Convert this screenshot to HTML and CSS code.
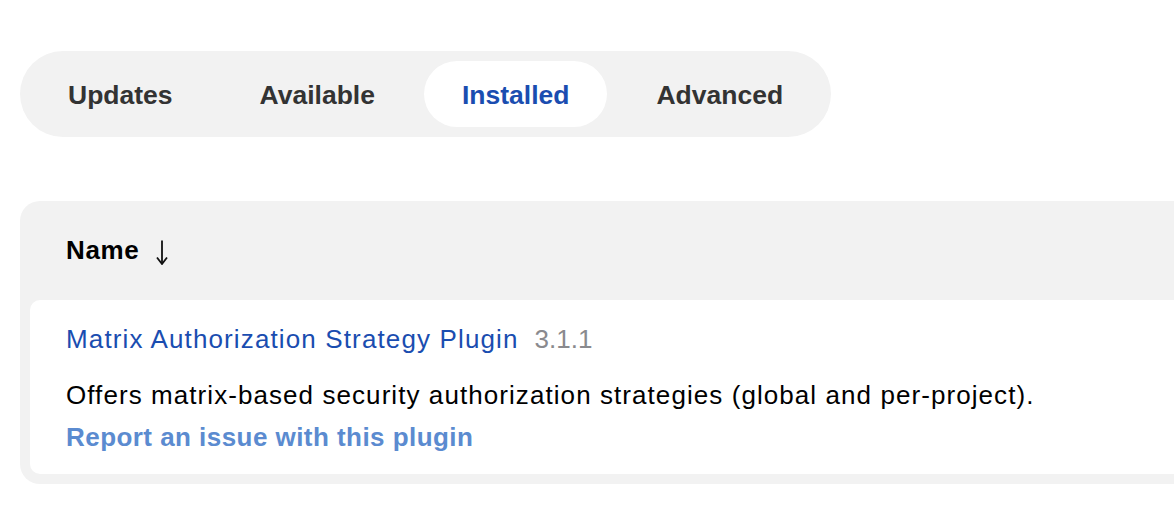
FILE: index.html
```html
<!DOCTYPE html>
<html>
<head>
<meta charset="utf-8">
<link rel="stylesheet" href="styles.css">
</head>
<body>
<div class="page">
  <nav class="tabs">
    <a class="tab">Updates</a>
    <a class="tab">Available</a>
    <a class="tab active">Installed</a>
    <a class="tab">Advanced</a>
  </nav>
  <div class="table">
    <div class="thead">
      <span class="th">Name</span>
      <svg class="arrow" width="12" height="25" viewBox="0 0 12 25" aria-hidden="true">
        <path d="M6 0.5 V23" stroke="#111" stroke-width="1.8" fill="none"/>
        <path d="M1 17.5 L6 24 L11 17.5" stroke="#111" stroke-width="1.8" fill="none" stroke-linejoin="miter"/>
      </svg>
    </div>
    <div class="row">
      <div class="title-line">
        <a class="plugin-name">Matrix Authorization Strategy Plugin</a>
        <span class="version">3.1.1</span>
      </div>
      <div class="desc">Offers matrix-based security authorization strategies (global and per-project).</div>
      <a class="report">Report an issue with this plugin</a>
    </div>
  </div>
</div>
</body>
</html>
```
FILE: styles.css
```css
html, body {
  margin: 0;
  padding: 0;
  background: #ffffff;
}
body {
  font-family: "Liberation Sans", Arial, sans-serif;
  color: #000;
  overflow: hidden;
  width: 1174px;
  height: 510px;
}
.page {
  padding: 51px 0 0 20px;
}
.tabs {
  display: inline-flex;
  gap: 11px;
  padding: 10px;
  background: #f2f2f2;
  border-radius: 43px;
}
.tab {
  display: flex;
  align-items: center;
  height: 66px;
  padding: 2px 38px 0;
  box-sizing: border-box;
  border-radius: 33px;
  font-size: 26.5px;
  font-weight: bold;
  color: #333333;
}
.tab.active {
  background: #ffffff;
  color: #1a4db0;
}
.table {
  margin-top: 64px;
  background: #f2f2f2;
  border-radius: 20px 0 0 20px;
  padding: 0 0 10px 10px;
  width: 1200px;
}
.thead {
  height: 99px;
  display: flex;
  align-items: center;
  padding-left: 36px;
  font-size: 26px;
}
.th {
  font-weight: bold;
  letter-spacing: 0.6px;
}
.arrow {
  margin-left: 17px;
  margin-top: 3px;
}
.row {
  background: #ffffff;
  border-radius: 10px 0 0 10px;
  padding: 22px 36px 20px;
  font-size: 26px;
}
.title-line {
  display: flex;
  align-items: baseline;
  gap: 16px;
  line-height: 34px;
}
.plugin-name {
  color: #1a4db0;
  letter-spacing: 1.13px;
}
.version {
  color: #8a8a8e;
}
.desc {
  margin-top: 22px;
  line-height: 34px;
  letter-spacing: 1.07px;
}
.report {
  display: block;
  font-weight: bold;
  color: #5b8bd0;
  line-height: 34px;
  margin-top: 8px;
  letter-spacing: 0.45px;
}
```
